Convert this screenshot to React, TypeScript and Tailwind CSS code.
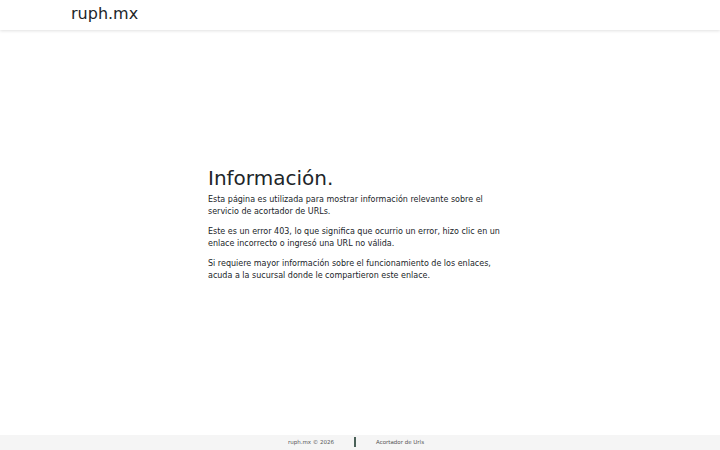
import React from 'react';

const font = { fontFamily: '"DejaVu Sans", sans-serif' };

const Navbar: React.FC = () => (
  <nav className="h-[30px] bg-white shadow-[0_1px_3px_rgba(0,0,0,0.12)] relative z-10">
    <div className="h-full flex items-center pb-[2px] pl-[71px]">
      <a href="#" className="text-[16px] leading-6 text-[#212529]">ruph.mx</a>
    </div>
  </nav>
);

const Footer: React.FC = () => (
  <footer className="h-[26px] bg-[#f5f5f5] pt-[2px]">
    <div className="flex items-start justify-center pr-[10px] text-[5.5px] leading-[10px] text-[#555]">
      <span className="w-[70px] text-right pr-[4px]">ruph.mx © 2026</span>
      <span className="mx-[16px] w-[2px] h-[10px] bg-[#4a6158]" />
      <span className="w-[70px] pl-[4px]">Acortador de Urls</span>
    </div>
  </footer>
);

const App: React.FC = () => {
  return (
    <div className="min-h-[461px] flex flex-col bg-white text-[#212529]" style={font}>
      <Navbar />
      <main className="flex-1 flex items-center justify-center pr-[4px] pb-[10px]">
        <div className="w-[300px]">
          <h1 className="text-[20px] leading-[24px] mb-[4px]">Información.</h1>
          <p className="text-[8px] leading-[12px] mb-[8px]">
            Esta página es utilizada para mostrar información relevante sobre el servicio de acortador de URLs.
          </p>
          <p className="text-[8px] leading-[12px] mb-[8px]">
            Este es un error 403, lo que significa que ocurrio un error, hizo clic en un enlace incorrecto o ingresó una URL no válida.
          </p>
          <p className="text-[8px] leading-[12px] mb-[8px]">
            Si requiere mayor información sobre el funcionamiento de los enlaces, acuda a la sucursal donde le compartieron este enlace.
          </p>
        </div>
      </main>
      <Footer />
    </div>
  );
};

export default App;
